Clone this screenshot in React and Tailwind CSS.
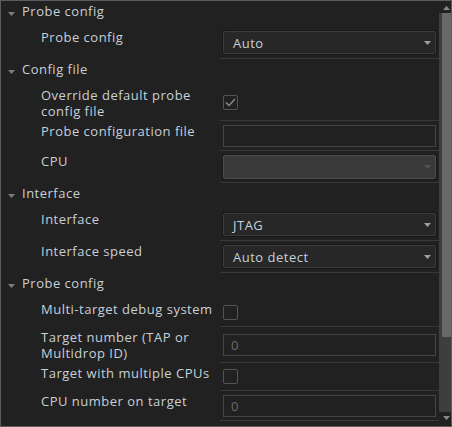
import React from "react";

const Arrow = ({ color = "#8a8a8a" }) => (
  <svg width="7" height="4" viewBox="0 0 7 4" className="shrink-0">
    <polygon points="0,0 7,0 3.5,4" fill={color} />
  </svg>
);

const Header = ({ title }) => (
  <div className="h-[26px] flex items-start pl-[7px]">
    <div className="mt-[11px]">
      <Arrow color="#7c7c7c" />
    </div>
    <span className="ml-[7px] pt-[2px] leading-[16px]">{title}</span>
  </div>
);

const Row = ({ label, h, children }) => (
  <div className="grid grid-cols-[219px_1fr]">
    <div className="pl-[40px] pt-[2px] pb-[2px] leading-[16px]">{label}</div>
    <div
      className={
        "border-b border-[#393939] flex items-center pl-[3px] pr-[3px] " + h
      }
    >
      {children}
    </div>
  </div>
);

const Select = ({ value }) => (
  <div className="w-full h-[23px] rounded-[2px] border border-[#3b3b3b] bg-[#272727] shadow-[0_0_0_1px_#181818] flex items-center justify-between pl-[9px] pr-[4px] text-[#c3d0dc]">
    <span className="leading-[16px]">{value}</span>
    <Arrow color="#a0a0a0" />
  </div>
);

const DisabledSelect = () => (
  <div className="w-full h-[24px] rounded-[2px] border border-[#4e4e4e] bg-[#3a3a3a] shadow-[0_0_0_1px_#1a1a1a] flex items-center justify-end pr-[4px]">
    <Arrow color="#555555" />
  </div>
);

const Input = ({ value }) => (
  <div className="w-full h-[22px] border border-[#454545] flex items-center pl-[7px] text-[#6c6c6c] leading-[16px]">
    {value}
  </div>
);

const Checkbox = ({ checked }) => (
  <div className="w-[15px] h-[15px] rounded-[2px] border border-[#545454] flex items-center justify-center">
    {checked && (
      <svg width="11" height="9" viewBox="0 0 11 9">
        <polyline
          points="1,4.5 4,7.5 10,1"
          fill="none"
          stroke="#8c8c8c"
          strokeWidth="1.4"
        />
      </svg>
    )}
  </div>
);

export default function App() {
  return (
    <div className="w-[452px] h-[427px] bg-[#212121] border border-[#5c5c5c] flex overflow-hidden font-['Open_Sans',sans-serif] text-[13px] tracking-[0.5px] text-[#c8d0d8]">
      <div className="flex-1 flex flex-col">
        <Header title="Probe config" />
        <Row label="Probe config" h="h-[32px]">
          <Select value="Auto" />
        </Row>
        <Header title="Config file" />
        <Row label={<>Override default probe<br />config file</>} h="">
          <Checkbox checked />
        </Row>
        <Row label="Probe configuration file" h="h-[30px]">
          <Input value="" />
        </Row>
        <Row label="CPU" h="h-[32px]">
          <DisabledSelect />
        </Row>
        <Header title="Interface" />
        <Row label="Interface" h="h-[32px]">
          <Select value="JTAG" />
        </Row>
        <Row label="Interface speed" h="h-[32px]">
          <Select value="Auto detect" />
        </Row>
        <Header title="Probe config" />
        <Row label="Multi-target debug system" h="h-[28px]">
          <Checkbox />
        </Row>
        <Row label={<>Target number (TAP or<br />Multidrop ID)</>} h="">
          <Input value="0" />
        </Row>
        <Row label="Target with multiple CPUs" h="h-[28px]">
          <Checkbox />
        </Row>
        <Row label="CPU number on target" h="h-[30px]">
          <Input value="0" />
        </Row>
      </div>
      <div className="w-[12px] flex flex-col">
        <div className="h-[12px] flex items-start justify-center pt-[5px] pl-[2px]">
          <svg width="7" height="4" viewBox="0 0 7 4">
            <polygon points="0,4 7,4 3.5,0" fill="#8a8a8a" />
          </svg>
        </div>
        <div className="flex-1 bg-[#3e3e3e] flex flex-col">
          <div className="h-[324px] ml-[3px] bg-[#686868]" />
        </div>
        <div className="h-[14px] flex items-start justify-center pt-[4px] pl-[2px]">
          <svg width="7" height="4" viewBox="0 0 7 4">
            <polygon points="0,0 7,0 3.5,4" fill="#8a8a8a" />
          </svg>
        </div>
      </div>
    </div>
  );
}
